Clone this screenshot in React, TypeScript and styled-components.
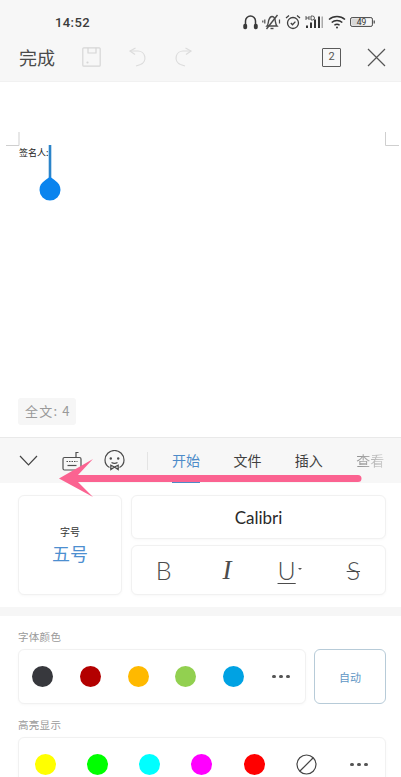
import React from "react";
import styled, { createGlobalStyle } from "styled-components";

const Global = createGlobalStyle`
  html, body { margin: 0; padding: 0; background: #fff; }
  body { font-family: "Noto Sans CJK SC", "Noto Sans", sans-serif; }
  * { box-sizing: border-box; }
`;

const Screen = styled.div`
  position: relative;
  width: 401px;
  height: 777px;
  overflow: hidden;
  background: #fff;
`;

const Top = styled.header`
  height: 82px;
  background: #f7f7f7;
  border-bottom: 1px solid #f1f1f1;
`;

const StatusBar = styled.div`
  height: 38px;
  padding: 5px 26px 0 55px;
  display: flex;
  align-items: center;
`;

const Time = styled.span`
  font: 500 13px/1 Roboto, sans-serif;
  letter-spacing: 0.4px;
  color: #3c3c3c;
  padding-top: 2px;
`;

const StatusIcons = styled.div`
  margin-left: auto;
  display: flex;
  align-items: center;
  gap: 4px;
`;

const Toolbar = styled.div`
  height: 43px;
  padding: 0 15px 5px 19px;
  display: flex;
  align-items: center;
`;

const Done = styled.span`
  font-size: 18px;
  line-height: 1;
  color: #4a4a4a;
  margin-right: 27px;
`;

const GhostIcon = styled.svg`
  display: block;
  margin-right: 27px;
`;

const PageBox = styled.span`
  margin-left: auto;
  width: 19px;
  height: 19px;
  border: 1.3px solid #5a5a5a;
  border-radius: 1px;
  font: 400 11px/16px Roboto, sans-serif;
  text-align: center;
  color: #555;
`;

const CloseIcon = styled.svg`
  display: block;
  margin-left: 26px;
`;

const Doc = styled.main`
  height: 355px;
  display: flex;
  flex-direction: column;
  padding: 50px 2px 12px 6px;
  position: relative;
`;

const Marks = styled.div`
  display: flex;
  justify-content: space-between;
`;

const Signer = styled.p`
  margin: 0 0 0 13px;
  padding-top: 1px;
  font-size: 9px;
  line-height: 12px;
  color: #222;
`;

const Handle = styled.svg`
  position: absolute;
  left: 39px;
  top: 63px;
`;

const Count = styled.span`
  margin: auto 0 0 12px;
  align-self: flex-start;
  width: 58px;
  height: 27px;
  padding-left: 7px;
  border-radius: 3px;
  background: #f6f6f6;
  font-size: 13px;
  line-height: 26px;
  letter-spacing: 1.2px;
  color: #999;
  white-space: nowrap;
`;

const TabBar = styled.nav`
  height: 46px;
  background: #f7f7f7;
  border-top: 1px solid #e9e9e9;
  display: flex;
  align-items: center;
  padding-left: 19px;
  overflow: hidden;
`;

const BarIcon = styled.svg<{ $gap: number }>`
  display: block;
  flex: none;
  margin-right: ${(p) => p.$gap}px;
`;

const Divider = styled.span`
  flex: none;
  width: 1px;
  height: 18px;
  background: #e4e4e4;
  margin-right: 24px;
`;

const Tab = styled.span<{ $state?: "active" | "fade" }>`
  position: relative;
  flex: none;
  width: 28px;
  margin: 0 33.4px 2px 0;
  font-size: 14px;
  line-height: 20px;
  white-space: nowrap;
  color: ${(p) => (p.$state === "active" ? "#4d8bc9" : p.$state === "fade" ? "transparent" : "#3f3f3f")};
  background: ${(p) => (p.$state === "fade" ? "linear-gradient(90deg, #8f8f8f, #d0d0d0)" : "none")};
  -webkit-background-clip: ${(p) => (p.$state === "fade" ? "text" : "border-box")};
  background-clip: ${(p) => (p.$state === "fade" ? "text" : "border-box")};
  &::after {
    content: "";
    display: ${(p) => (p.$state === "active" ? "block" : "none")};
    position: absolute;
    left: 0;
    right: 0;
    top: 31px;
    height: 2px;
    background: #4d8bc9;
  }
`;

const Format = styled.section`
  padding: 12px 15px 12px 18px;
  display: grid;
  grid-template-columns: 104px 1fr;
  grid-template-rows: 44px 50px;
  gap: 6px 9px;
`;

const Card = styled.div`
  background: #fff;
  border: 1px solid #f1f1f1;
  border-radius: 6px;
  box-shadow: 0 1px 3px rgba(0, 0, 0, 0.03);
`;

const SizeCard = styled(Card)`
  grid-row: 1 / span 2;
  display: flex;
  flex-direction: column;
  align-items: center;
  justify-content: center;
  gap: 1px;
  padding-bottom: 2px;
`;

const SizeLabel = styled.span`
  font-size: 10px;
  line-height: 16px;
  color: #333;
`;

const SizeValue = styled.span`
  font-size: 18px;
  line-height: 24px;
  color: #4d8fd0;
`;

const FontCard = styled(Card)`
  display: flex;
  align-items: center;
  justify-content: center;
  font: 400 17px/1 Lato, sans-serif;
  color: #2a2a2a;
`;

const StyleCard = styled(Card)`
  display: grid;
  grid-template-columns: repeat(4, 1fr);
  align-items: center;
  justify-items: center;
`;

const Glyph = styled.span<{ $kind?: "i" | "u" | "s" }>`
  position: relative;
  font: ${(p) => (p.$kind === "i" ? "italic 400 27px/1 'Liberation Serif'" : "300 25px/1 Lato")}, sans-serif;
  color: #4c4c4c;
  margin-right: ${(p) => (p.$kind === "u" ? "7px" : "0")};
  text-decoration: ${(p) => (p.$kind === "s" ? "line-through" : p.$kind === "u" ? "underline" : "none")};
  text-decoration-thickness: 1.2px;
  text-underline-offset: 3px;
`;

const Caret = styled.span`
  position: absolute;
  left: 100%;
  top: 10px;
  margin-left: 2px;
  width: 0;
  height: 0;
  border: 2px solid transparent;
  border-top-color: #555;
`;

const Band = styled.div`
  height: 9px;
  background: #f6f6f6;
`;

const Label = styled.h4`
  margin: 0;
  padding: 13px 0 4px 18px;
  font-size: 10.5px;
  line-height: 16px;
  font-weight: 400;
  color: #9a9a9a;
  letter-spacing: 0.3px;
`;

const ColorRow = styled.div`
  display: flex;
  gap: 8px;
  padding: 0 15px 0 18px;
  height: 55px;
`;

const Swatches = styled(Card)<{ $cols: number }>`
  flex: 1;
  min-width: 0;
  height: 100%;
  display: grid;
  grid-template-columns: repeat(${(p) => p.$cols}, 1fr);
  align-items: center;
  justify-items: center;
`;

const Dot = styled.span<{ $c: string }>`
  width: 21px;
  height: 21px;
  border-radius: 50%;
  background: ${(p) => p.$c};
`;

const More = styled.span`
  display: flex;
  gap: 3.5px;
  & > i {
    width: 3.5px;
    height: 3.5px;
    border-radius: 50%;
    background: #555;
  }
`;

const Auto = styled.div`
  width: 72px;
  border: 1px solid #b7cbd8;
  border-radius: 6px;
  display: flex;
  align-items: center;
  justify-content: center;
  font-size: 11px;
  color: #5f96c4;
`;

const Arrow = styled.svg`
  position: absolute;
  left: 0;
  top: 455px;
  pointer-events: none;
`;

const Dots = () => (
  <More>
    <i />
    <i />
    <i />
  </More>
);

const StatusGlyphs = () => (
  <StatusIcons>
    <svg width="15" height="16" viewBox="0 0 15 16" fill="none" stroke="#3a3a3a" strokeWidth="1.5">
      <path d="M2.5 12V7a5 5 0 0 1 10 0v5" />
      <rect x="1" y="10.5" width="2.4" height="4" rx="1" fill="#3a3a3a" />
      <rect x="11.6" y="10.5" width="2.4" height="4" rx="1" fill="#3a3a3a" />
    </svg>
    <svg width="19" height="16" viewBox="0 0 19 16" fill="none" stroke="#4a4a4a" strokeWidth="1.4">
      <path d="M5 12c1.500-1.500 1-4 2-6.500C7.800 3.500 9 2.500 10 2.500s2.500 1 3 3c.6 2.500.5 5 2 6.500z" />
      <path d="M4.500 15 15.500 1" />
      <path d="M8.500 14.500h3" />
      <path d="M2.800 5.500v4M.8 6.500v2M17.500 5.500v4" strokeWidth="1.200" />
    </svg>
    <svg width="16" height="16" viewBox="0 0 16 16" fill="none" stroke="#3f3f3f" strokeWidth="1.300">
      <circle cx="8" cy="9" r="5.500" />
      <path d="M5.800 9 7.500 10.800 10.400 7.600" />
      <path d="M1 4 4 1.500M15 4 12 1.500" />
    </svg>
    <svg width="19" height="14" viewBox="0 0 19 14">
      <rect x="1" y="10.500" width="2" height="2.500" fill="#333" />
      <rect x="5" y="7.500" width="2" height="5.500" fill="#333" />
      <rect x="9" y="4.500" width="2" height="8.500" fill="#333" />
      <rect x="13" y="1.500" width="2" height="11.500" fill="#333" />
      <rect x="16.500" y="1.500" width="1.500" height="11.500" fill="#aaa" />
      <path d="M1 1v4M4 1v4M1 3h3M6 1v4h1.500a2 2 0 0 0 0-4z" stroke="#333" strokeWidth=".8" fill="none" />
    </svg>
    <svg width="18" height="14" viewBox="0 0 18 14" fill="none" stroke="#333" strokeWidth="1.500">
      <path d="M1 4.500c4.500-4 11.500-4 16 0" />
      <path d="M3.700 7.500c3-2.700 7.600-2.700 10.600 0" />
      <path d="M6.400 10.300c1.500-1.300 3.700-1.300 5.200 0" />
      <circle cx="9" cy="12.500" r="1" fill="#333" stroke="none" />
    </svg>
    <svg width="25" height="12" viewBox="0 0 25 12" fill="none">
      <rect x=".6" y="1.600" width="21.800" height="8.800" rx="1.500" stroke="#444" strokeWidth="1" />
      <rect x="1.800" y="2.800" width="10" height="6.400" fill="#d8d8d8" />
      <rect x="23.600" y="4.500" width="1.200" height="3" fill="#444" />
      <text x="11.500" y="9" textAnchor="middle" fontSize="8.500" fontFamily="Roboto" fill="#333">49</text>
    </svg>
  </StatusIcons>
);

export default function App() {
  return (
    <Screen>
      <Global />
      <Top>
        <StatusBar>
          <Time>14:52</Time>
          <StatusGlyphs />
        </StatusBar>
        <Toolbar>
          <Done>完成</Done>
          <GhostIcon width="19" height="20" viewBox="0 0 19 20" fill="none" stroke="#d6d6d6" strokeWidth="1.200">
            <rect x=".8" y=".8" width="17.400" height="18.400" rx="1" />
            <path d="M6 .8v5.200h8V.8" />
            <circle cx="5.500" cy="15.500" r=".5" />
          </GhostIcon>
          <GhostIcon width="19" height="20" viewBox="0 0 19 20" fill="none" stroke="#dcdcdc" strokeWidth="1.200">
            <path d="M2 4h7.500a7 7 0 0 1 3 13.500L8 19" />
            <path d="M7.500 1 2 4l5 3.500" />
          </GhostIcon>
          <GhostIcon width="19" height="20" viewBox="0 0 19 20" fill="none" stroke="#dcdcdc" strokeWidth="1.200">
            <path d="M17 4H9.500a7 7 0 0 0-3 13.500L11 19" />
            <path d="M11.500 1 17 4l-5 3.500" />
          </GhostIcon>
          <PageBox>2</PageBox>
          <CloseIcon width="19" height="19" viewBox="0 0 19 19" fill="none" stroke="#555" strokeWidth="1.200">
            <path d="M1 1l17 17M18 1 1 18" />
          </CloseIcon>
        </Toolbar>
      </Top>

      <Doc>
        <Marks>
          <svg width="14" height="14" viewBox="0 0 14 14" fill="none" stroke="#cfcfcf" strokeWidth="1">
            <path d="M0 13.500h13V0" />
          </svg>
          <svg width="14" height="14" viewBox="0 0 14 14" fill="none" stroke="#cfcfcf" strokeWidth="1">
            <path d="M14 13.500H.5V0" />
          </svg>
        </Marks>
        <Signer>签名人:</Signer>
        <Handle width="22" height="56" viewBox="0 0 22 56">
          <rect x="9.700" y="0" width="2.600" height="36" fill="#2b84c9" />
          <path d="M11 31 C 13 35 21.500 36 21.500 45 A10.500 10.500 0 0 1 .5 45 C.5 36 9 35 11 31z" fill="#0a84ee" />
        </Handle>
        <Count>全文: 4</Count>
      </Doc>

      <TabBar>
        <BarIcon $gap={24} width="19" height="11" viewBox="0 0 19 11" fill="none" stroke="#444" strokeWidth="1.200">
          <path d="M1 1l8.500 9L18 1" />
        </BarIcon>
        <BarIcon $gap={22} width="20" height="20" viewBox="0 0 20 20" fill="none" stroke="#505050" strokeWidth="1.200">
          <rect x="1" y="6.500" width="18" height="12.500" rx="1.500" />
          <path d="M14 6.500V1.500h2.500" />
          <path d="M4.500 10.500h11" strokeDasharray="1.500 1" />
          <path d="M5.500 14.500h9" />
        </BarIcon>
        <BarIcon $gap={22} width="21" height="21" viewBox="0 0 21 21" fill="none" stroke="#4a4a4a" strokeWidth="1.200">
          <path d="M5.500 17.500C2.800 16 1 13.300 1 10a9.500 9.500 0 0 1 19 0c0 3.300-1.800 6-4.500 7.500" />
          <circle cx="6.800" cy="8.500" r="1.200" fill="#4a4a4a" stroke="none" />
          <circle cx="14.200" cy="8.500" r="1.200" fill="#4a4a4a" stroke="none" />
          <path d="M7.500 12.500c1.800 1 4.200 1 6 0" />
          <path d="M10.500 17 6.800 15.200v4.300zM10.500 17l3.700-1.800v4.300z" />
        </BarIcon>
        <Divider />
        <Tab $state="active">开始</Tab>
        <Tab>文件</Tab>
        <Tab>插入</Tab>
        <Tab $state="fade">查看</Tab>
      </TabBar>

      <Format>
        <SizeCard>
          <SizeLabel>字号</SizeLabel>
          <SizeValue>五号</SizeValue>
        </SizeCard>
        <FontCard>Calibri</FontCard>
        <StyleCard>
          <Glyph>B</Glyph>
          <Glyph $kind="i">I</Glyph>
          <Glyph $kind="u">
            U<Caret />
          </Glyph>
          <Glyph $kind="s">S</Glyph>
        </StyleCard>
      </Format>

      <Band />

      <Label>字体颜色</Label>
      <ColorRow>
        <Swatches $cols={6}>
          <Dot $c="#37383d" />
          <Dot $c="#b30000" />
          <Dot $c="#ffb900" />
          <Dot $c="#92d050" />
          <Dot $c="#00a2e3" />
          <Dots />
        </Swatches>
        <Auto>自动</Auto>
      </ColorRow>

      <Label>高亮显示</Label>
      <ColorRow>
        <Swatches $cols={7}>
          <Dot $c="#ffff00" />
          <Dot $c="#00ff00" />
          <Dot $c="#00ffff" />
          <Dot $c="#ff00ff" />
          <Dot $c="#ff0000" />
          <svg width="21" height="21" viewBox="0 0 21 21" fill="none" stroke="#444" strokeWidth="1.200">
            <circle cx="10.500" cy="10.500" r="9.500" />
            <path d="M4 17 17 4" />
          </svg>
          <Dots />
        </Swatches>
      </ColorRow>

      <Arrow width="401" height="50" viewBox="0 0 401 50">
        <path d="M59 23.500 93 4 78 20H358a3.500 3.500 0 0 1 0 7H78L93 42z" fill="#fb6391" />
      </Arrow>
    </Screen>
  );
}
